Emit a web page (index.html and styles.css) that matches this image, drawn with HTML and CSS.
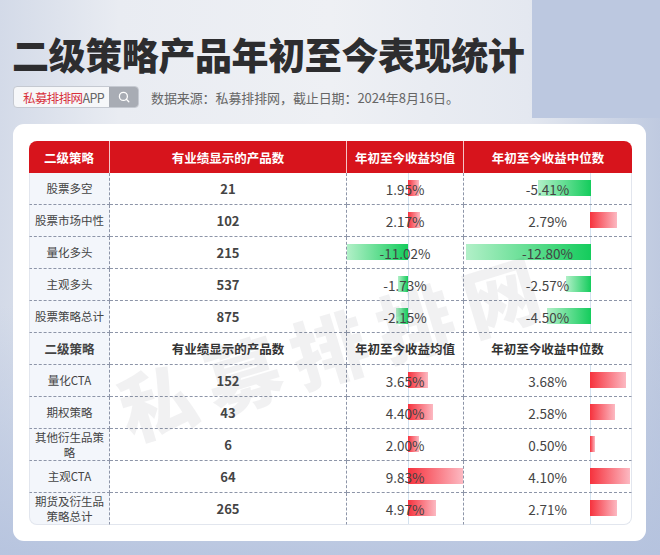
FILE: index.html
```html
<!DOCTYPE html>
<html lang="zh-CN">
<head>
<meta charset="utf-8">
<title>二级策略产品年初至今表现统计</title>
<link rel="stylesheet" href="styles.css">
</head>
<body>
<div class="page">
  <div class="deco"></div>
  <header class="head">
    <h1 class="title">二级策略产品年初至今表现统计</h1>
    <div class="meta">
      <div class="search">
        <span class="brand"><span class="red">私募排排网</span>APP</span>
        <span class="sbtn">
          <svg width="12" height="12" viewBox="0 0 12 12"><circle cx="5.4" cy="5.4" r="4" fill="none" stroke="#fff" stroke-width="1.3"/><path d="M8.3 8.3 L10.8 10.8" stroke="#fff" stroke-width="1.3" stroke-linecap="round"/></svg>
        </span>
      </div>
      <span class="source">数据来源：私募排排网，截止日期：2024年8月16日。</span>
    </div>
  </header>
  <section class="card">
    <div class="watermark">私募排排网</div>
    <table class="tbl">
      <colgroup><col class="w1"><col class="w2"><col class="w3"><col class="w4"></colgroup>
      <tr class="hrow">
        <th class="tl">二级策略</th><th>有业绩显示的产品数</th><th>年初至今收益均值</th><th class="tr">年初至今收益中位数</th>
      </tr>
      <tr>
        <td class="name">股票多空</td><td class="num">21</td>
        <td class="pc c3"><i class="axis"></i><i class="bar pos" style="width:11px"></i><span class="v">1.95%</span></td>
        <td class="pc c4"><i class="axis"></i><i class="bar neg" style="width:53px"></i><span class="v">-5.41%</span></td>
      </tr>
      <tr>
        <td class="name">股票市场中性</td><td class="num">102</td>
        <td class="pc c3"><i class="axis"></i><i class="bar pos" style="width:12px"></i><span class="v">2.17%</span></td>
        <td class="pc c4"><i class="axis"></i><i class="bar pos" style="width:27px"></i><span class="v">2.79%</span></td>
      </tr>
      <tr>
        <td class="name">量化多头</td><td class="num">215</td>
        <td class="pc c3"><i class="axis"></i><i class="bar neg" style="width:61px"></i><span class="v">-11.02%</span></td>
        <td class="pc c4"><i class="axis"></i><i class="bar neg" style="width:125px"></i><span class="v">-12.80%</span></td>
      </tr>
      <tr>
        <td class="name">主观多头</td><td class="num">537</td>
        <td class="pc c3"><i class="axis"></i><i class="bar neg" style="width:10px"></i><span class="v">-1.73%</span></td>
        <td class="pc c4"><i class="axis"></i><i class="bar neg" style="width:25px"></i><span class="v">-2.57%</span></td>
      </tr>
      <tr>
        <td class="name">股票策略总计</td><td class="num">875</td>
        <td class="pc c3"><i class="axis"></i><i class="bar neg" style="width:12px"></i><span class="v">-2.15%</span></td>
        <td class="pc c4"><i class="axis"></i><i class="bar neg" style="width:44px"></i><span class="v">-4.50%</span></td>
      </tr>
      <tr class="srow">
        <td class="name">二级策略</td><td>有业绩显示的产品数</td><td>年初至今收益均值</td><td>年初至今收益中位数</td>
      </tr>
      <tr>
        <td class="name">量化CTA</td><td class="num">152</td>
        <td class="pc c3"><i class="axis"></i><i class="bar pos" style="width:20px"></i><span class="v">3.65%</span></td>
        <td class="pc c4"><i class="axis"></i><i class="bar pos" style="width:36px"></i><span class="v">3.68%</span></td>
      </tr>
      <tr>
        <td class="name">期权策略</td><td class="num">43</td>
        <td class="pc c3"><i class="axis"></i><i class="bar pos" style="width:25px"></i><span class="v">4.40%</span></td>
        <td class="pc c4"><i class="axis"></i><i class="bar pos" style="width:25px"></i><span class="v">2.58%</span></td>
      </tr>
      <tr>
        <td class="name">其他衍生品策略</td><td class="num">6</td>
        <td class="pc c3"><i class="axis"></i><i class="bar pos" style="width:11px"></i><span class="v">2.00%</span></td>
        <td class="pc c4"><i class="axis"></i><i class="bar pos" style="width:5px"></i><span class="v">0.50%</span></td>
      </tr>
      <tr>
        <td class="name">主观CTA</td><td class="num">64</td>
        <td class="pc c3"><i class="axis"></i><i class="bar pos" style="width:55px"></i><span class="v">9.83%</span></td>
        <td class="pc c4"><i class="axis"></i><i class="bar pos" style="width:40px"></i><span class="v">4.10%</span></td>
      </tr>
      <tr class="last">
        <td class="name bl">期货及衍生品策略总计</td><td class="num">265</td>
        <td class="pc c3"><i class="axis"></i><i class="bar pos" style="width:28px"></i><span class="v">4.97%</span></td>
        <td class="pc c4 br"><i class="axis"></i><i class="bar pos" style="width:27px"></i><span class="v">2.71%</span></td>
      </tr>
    </table>
  </section>
</div>
</body>
</html>
```

FILE: styles.css
```css
* { box-sizing: border-box; }
html, body { margin: 0; padding: 0; }
body {
  width: 660px;
  height: 555px;
  overflow: hidden;
  font-family: "Noto Sans CJK SC", "Noto Sans", sans-serif;
}
.page {
  position: relative;
  width: 660px;
  height: 555px;
  overflow: hidden;
  background:
    linear-gradient(180deg, rgba(255,255,255,0) 55%, rgba(180,194,222,0.9) 100%),
    linear-gradient(90deg, #d3dae8 0%, #e9ecf2 18%, #eef0f4 50%, #e4e8f0 80%, #bfcae0 100%);
}
.deco {
  position: absolute;
  right: 0;
  top: 0;
  width: 128px;
  height: 118px;
  background: #bcc8e0;
}
.head {
  position: relative;
  padding: 32px 0 0 12px;
}
.title {
  margin: 0;
  font-size: 37px;
  line-height: 44px;
  font-weight: 900;
  color: #2d2d2f;
  letter-spacing: -0.4px;
}
.meta {
  display: flex;
  align-items: center;
  margin-top: 10px;
  padding-left: 1px;
  height: 22px;
}
.search {
  display: flex;
  height: 22px;
  width: 126px;
  border: 1px solid #c5c9d1;
  border-radius: 4px;
  overflow: hidden;
  background: #f6f7f9;
}
.brand {
  flex: 1;
  display: flex;
  align-items: center;
  padding-left: 9px;
  font-size: 12.5px;
  color: #666;
  letter-spacing: -0.6px;
  white-space: nowrap;
}
.red { color: #d8323d; }
.sbtn {
  width: 29px;
  display: flex;
  align-items: center;
  justify-content: center;
  background: #a8acb4;
}
.source {
  margin-left: 12px;
  font-size: 13px;
  color: #666;
  letter-spacing: -0.1px;
}
.card {
  position: relative;
  margin: 16px 0 0 13px;
  width: 633px;
  height: 417px;
  background: #fff;
  border-radius: 11px;
  padding: 17px 14px 0 16px;
}
.watermark {
  position: absolute;
  left: 322px;
  top: 220px;
  transform: translate(-50%, -50%) rotate(-17deg);
  font-size: 76px;
  font-weight: 900;
  letter-spacing: 14px;
  color: rgba(90, 90, 100, 0.085);
  white-space: nowrap;
  pointer-events: none;
  z-index: 3;
}
.tbl {
  width: 603px;
  table-layout: fixed;
  border-collapse: separate;
  border-spacing: 0;
}
.w1 { width: 81px; }
.w2 { width: 237px; }
.w3 { width: 117px; }
.w4 { width: 168px; }
.tbl tr { height: 32px; }
.tbl th, .tbl td {
  padding: 0;
  text-align: center;
  vertical-align: middle;
}
.hrow th {
  background: #d7141c;
  color: #fff;
  font-size: 12.5px;
  font-weight: 700;
  border-right: 1px solid rgba(255,255,255,0.75);
}
.hrow th:last-child { border-right: none; }
.tl { border-top-left-radius: 8px; }
.tr { border-top-right-radius: 8px; }
.tbl td {
  border-right: 1px dashed #8d95a8;
  border-bottom: 1px dashed #8d95a8;
  font-size: 13px;
  color: #444;
}
.tbl td:first-child { border-left: 1px solid #e2e6ee; }
.tbl td:last-child { border-right: 1px solid #e2e6ee; }
.last td { border-bottom: 1px solid #e2e6ee; }
.bl { border-bottom-left-radius: 8px; }
.br { border-bottom-right-radius: 8px; }
.tbl td.name {
  background: #f3f6fb;
  font-size: 11.5px;
  line-height: 15px;
  color: #444;
}
.num {
  font-size: 14.5px;
  font-weight: 700;
  color: #2a2a2a;
}
.srow td {
  font-size: 12.5px;
  font-weight: 700;
  color: #333;
}
.srow td.name { background: #f3f6fb; font-size: 12.5px; }
.pc {
  position: relative;
}
.axis {
  position: absolute;
  top: 0;
  bottom: 0;
  width: 1px;
  background: #d4e2ef;
}
.bar {
  position: absolute;
  top: 7px;
  height: 16px;
}
.bar.pos { background: linear-gradient(90deg, #f6323d 0%, #fcb9c2 100%); }
.bar.neg { background: linear-gradient(90deg, #b2f0c8 0%, #14cc5c 100%); }
.c3 .axis { left: 61px; }
.c3 .bar.pos { left: 61px; }
.c3 .bar.neg { right: 55px; }
.c4 .axis { left: 126px; }
.c4 .bar.pos { left: 126px; }
.c4 .bar.neg { right: 40px; }
.v {
  position: relative;
  z-index: 1;
  font-size: 13.5px;
  color: #444;
}
```
